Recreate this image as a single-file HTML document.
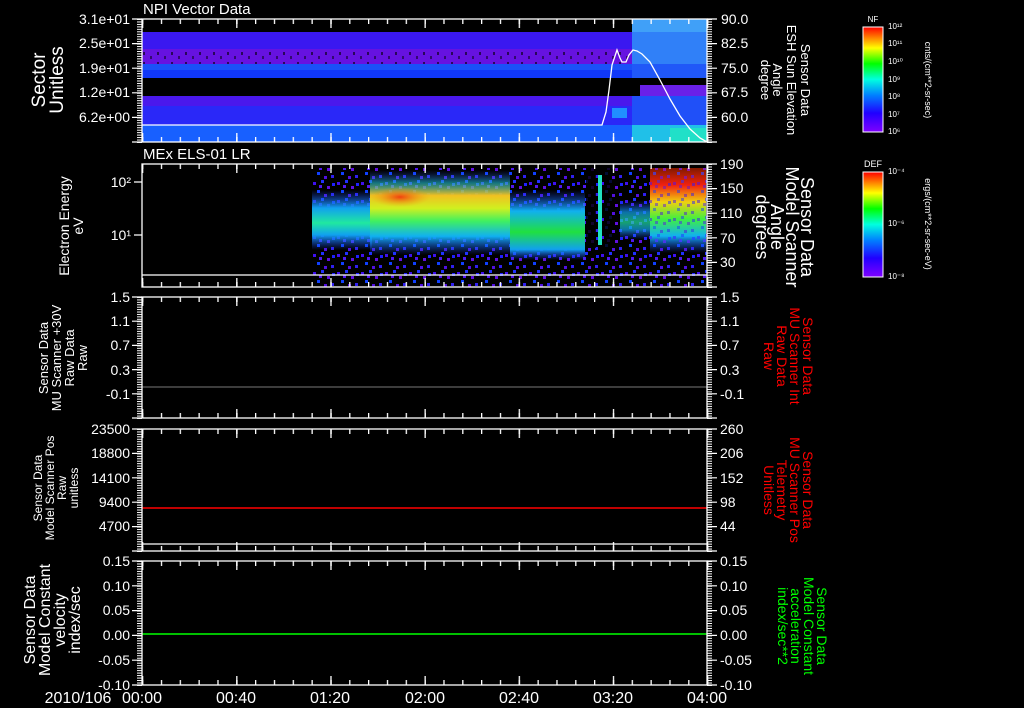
<!DOCTYPE html>
<html><head><meta charset="utf-8"><style>
html,body{margin:0;padding:0;background:#000;width:1024px;height:708px;overflow:hidden}
svg{display:block}
text{font-family:"Liberation Sans",sans-serif}
</style></head><body>
<svg width="1024" height="708" viewBox="0 0 1024 708" xmlns="http://www.w3.org/2000/svg" fill="#fff">
<defs>
<pattern id="noise" width="24" height="18" patternUnits="userSpaceOnUse">
<rect x="1" y="2" width="3" height="3" fill="#4010f0"/><rect x="9" y="0" width="3" height="3" fill="#2030ff"/>
<rect x="15" y="6" width="3" height="3" fill="#6010e0"/><rect x="5" y="10" width="3" height="3" fill="#1040ff"/>
<rect x="19" y="13" width="3" height="3" fill="#3020f0"/><rect x="12" y="14" width="3" height="3" fill="#5010e0"/>
<rect x="20" y="3" width="3" height="3" fill="#2020ff"/><rect x="7" y="5" width="3" height="3" fill="#5018f0"/>
</pattern>
<pattern id="speck" width="14" height="10" patternUnits="userSpaceOnUse">
<rect x="3" y="2" width="2" height="3" fill="#000" opacity=".6"/><rect x="10" y="6" width="2" height="3" fill="#000" opacity=".5"/>
</pattern>
<pattern id="xt" x="142" y="0" width="18.833" height="10" patternUnits="userSpaceOnUse"><rect x="0" y="0" width="1.3" height="10" fill="#fff"/></pattern>
<pattern id="xT" x="142" y="0" width="94.167" height="12" patternUnits="userSpaceOnUse"><rect x="0" y="0" width="1.3" height="12" fill="#fff"/></pattern>
<pattern id="y1" x="0" y="19" width="10" height="2.46" patternUnits="userSpaceOnUse"><rect width="10" height="1" fill="#fff"/></pattern>
<pattern id="y2" x="0" y="164" width="10" height="2.46" patternUnits="userSpaceOnUse"><rect width="10" height="1" fill="#fff"/></pattern>
<pattern id="y3" x="0" y="297" width="10" height="2.42" patternUnits="userSpaceOnUse"><rect width="10" height="1" fill="#fff"/></pattern>
<pattern id="y4" x="0" y="429" width="10" height="2.44" patternUnits="userSpaceOnUse"><rect width="10" height="1" fill="#fff"/></pattern>
<pattern id="y5" x="0" y="561" width="10" height="2.48" patternUnits="userSpaceOnUse"><rect width="10" height="1" fill="#fff"/></pattern>
<linearGradient id="nf" x1="0" y1="1" x2="0" y2="0">
<stop offset="0" stop-color="#8000ff"/><stop offset=".18" stop-color="#2000ff"/><stop offset=".35" stop-color="#0080ff"/><stop offset=".5" stop-color="#00ffe0"/><stop offset=".65" stop-color="#00ff00"/><stop offset=".8" stop-color="#ffff00"/><stop offset="1" stop-color="#ff0000"/>
</linearGradient>
<linearGradient id="g1" x1="0" y1="0" x2="0" y2="1">
<stop offset="0" stop-color="#2040ff" stop-opacity="0"/><stop offset=".3" stop-color="#10a0f0"/><stop offset=".55" stop-color="#20e8a0"/><stop offset=".75" stop-color="#10a0f0"/><stop offset="1" stop-color="#2040ff" stop-opacity="0"/>
</linearGradient>
<linearGradient id="g2" x1="0" y1="0" x2="0" y2="1">
<stop offset="0" stop-color="#3040ff" stop-opacity="0"/><stop offset=".15" stop-color="#20c0d0" stop-opacity=".6"/><stop offset=".3" stop-color="#f0c020"/><stop offset=".45" stop-color="#d0f020"/><stop offset=".6" stop-color="#40f060"/><stop offset=".78" stop-color="#10b0f0"/><stop offset="1" stop-color="#2040ff" stop-opacity="0"/>
</linearGradient>
<linearGradient id="g3" x1="0" y1="0" x2="0" y2="1">
<stop offset="0" stop-color="#2040ff" stop-opacity="0"/><stop offset=".3" stop-color="#10b0f0"/><stop offset=".6" stop-color="#20e040"/><stop offset=".85" stop-color="#10a0f0"/><stop offset="1" stop-color="#2040ff" stop-opacity="0"/>
</linearGradient>
<linearGradient id="g4" x1="0" y1="0" x2="0" y2="1">
<stop offset="0" stop-color="#ff3000" stop-opacity=".5"/><stop offset=".2" stop-color="#f02010"/><stop offset=".4" stop-color="#f0d010"/><stop offset=".6" stop-color="#40f040"/><stop offset=".8" stop-color="#10b0f0"/><stop offset="1" stop-color="#2040ff" stop-opacity="0"/>
</linearGradient>
<radialGradient id="or" cx=".5" cy=".5" r=".5"><stop offset="0" stop-color="#f04010"/><stop offset="1" stop-color="#f0a010" stop-opacity="0"/></radialGradient>
</defs>

<!-- Panel 1 spectrogram -->
<rect x="142" y="32" width="490" height="17" fill="#3a18f0"/>
<rect x="142" y="49" width="490" height="15" fill="#6612e0"/>
<rect x="142" y="49" width="490" height="15" fill="url(#speck)"/>
<rect x="142" y="64" width="490" height="6" fill="#1a50f8"/>
<rect x="142" y="70" width="490" height="8" fill="#1038f8"/>
<rect x="142" y="96" width="490" height="10" fill="#4a18ec"/>
<rect x="142" y="106" width="490" height="19" fill="#2a28f8"/>
<rect x="142" y="125" width="490" height="17" fill="#1860ff"/>
<rect x="632" y="19" width="75" height="13" fill="#40a0f8"/>
<rect x="632" y="32" width="75" height="32" fill="#3080f8"/>
<rect x="632" y="64" width="75" height="14" fill="#2058f8"/>
<rect x="640" y="85" width="67" height="11" fill="#6a20e8"/>
<rect x="632" y="96" width="75" height="29" fill="#2050f8"/>
<rect x="632" y="125" width="75" height="17" fill="#20c0e8"/>
<rect x="670" y="128" width="37" height="14" fill="#20e0c8"/>
<rect x="612" y="108" width="15" height="10" fill="#2090ff"/>
<polyline fill="none" stroke="#fff" stroke-width="1.3" points="142,125 602,125 606,112 609,90 612,65 615,56 617,50 620,58 622,62 626,62 629,55 633,50 637,51 642,54 650,62 660,80 670,99 680,116 690,129 700,138 707,142"/>

<!-- Panel 2 spectrogram -->
<rect x="312" y="168" width="395" height="119" fill="url(#noise)"/>
<rect x="312" y="190" width="60" height="60" fill="url(#g1)"/>
<rect x="370" y="170" width="140" height="85" fill="url(#g2)"/>
<ellipse cx="400" cy="197" rx="30" ry="10" fill="url(#or)"/>
<rect x="510" y="190" width="75" height="70" fill="url(#g3)"/>
<rect x="620" y="200" width="30" height="40" fill="url(#g1)" opacity=".7"/>
<rect x="598" y="175" width="4" height="70" fill="#20e0c0"/>
<rect x="650" y="168" width="56" height="85" fill="url(#g4)"/>
<rect x="650" y="168" width="56" height="85" fill="url(#noise)" opacity=".5"/>
<rect x="586" y="168" width="10" height="80" fill="#000" opacity=".8"/>
<rect x="604" y="168" width="8" height="80" fill="#000" opacity=".8"/>
<line x1="142" y1="275" x2="707" y2="275" stroke="#fff" stroke-width="1.3"/>

<!-- data lines -->
<line x1="142" y1="387" x2="707" y2="387" stroke="#777" stroke-width="1"/>
<line x1="142" y1="508" x2="707" y2="508" stroke="#ff0000" stroke-width="1.5"/>
<line x1="142" y1="544" x2="707" y2="544" stroke="#fff" stroke-width="1.3"/>
<line x1="142" y1="634" x2="707" y2="634" stroke="#00ff00" stroke-width="1.5"/>

<!-- frames -->
<g stroke="#fff" stroke-width="1.3" fill="none">
<rect x="142" y="19" width="565" height="123"/>
<rect x="142" y="164" width="565" height="123"/>
<rect x="142" y="297" width="565" height="121"/>
<rect x="142" y="429" width="565" height="122"/>
<rect x="142" y="561" width="565" height="124"/>
</g>
<!-- x ticks -->
<g>
<rect x="141.5" y="19" width="567" height="5" fill="url(#xt)"/><rect x="141.5" y="137" width="567" height="5" fill="url(#xt)"/>
<rect x="141.5" y="19" width="567" height="9" fill="url(#xT)"/><rect x="141.5" y="133" width="567" height="9" fill="url(#xT)"/>
<rect x="141.5" y="164" width="567" height="5" fill="url(#xt)"/><rect x="141.5" y="282" width="567" height="5" fill="url(#xt)"/>
<rect x="141.5" y="164" width="567" height="9" fill="url(#xT)"/><rect x="141.5" y="278" width="567" height="9" fill="url(#xT)"/>
<rect x="141.5" y="297" width="567" height="5" fill="url(#xt)"/><rect x="141.5" y="413" width="567" height="5" fill="url(#xt)"/>
<rect x="141.5" y="297" width="567" height="9" fill="url(#xT)"/><rect x="141.5" y="409" width="567" height="9" fill="url(#xT)"/>
<rect x="141.5" y="429" width="567" height="5" fill="url(#xt)"/><rect x="141.5" y="546" width="567" height="5" fill="url(#xt)"/>
<rect x="141.5" y="429" width="567" height="9" fill="url(#xT)"/><rect x="141.5" y="542" width="567" height="9" fill="url(#xT)"/>
<rect x="141.5" y="561" width="567" height="5" fill="url(#xt)"/><rect x="141.5" y="680" width="567" height="5" fill="url(#xt)"/>
<rect x="141.5" y="561" width="567" height="9" fill="url(#xT)"/><rect x="141.5" y="676" width="567" height="9" fill="url(#xT)"/>
</g>
<!-- y dense ticks -->
<g>
<rect x="707" y="19" width="5" height="124" fill="url(#y1)"/><rect x="137" y="19" width="5" height="124" fill="url(#y1)"/>
<rect x="707" y="164" width="5" height="124" fill="url(#y2)"/>
<rect x="707" y="297" width="5" height="122" fill="url(#y3)"/><rect x="137" y="297" width="5" height="122" fill="url(#y3)"/>
<rect x="707" y="429" width="5" height="123" fill="url(#y4)"/><rect x="137" y="429" width="5" height="123" fill="url(#y4)"/>
<rect x="707" y="561" width="5" height="125" fill="url(#y5)"/><rect x="137" y="561" width="5" height="125" fill="url(#y5)"/>
</g>
<g stroke="#fff" stroke-width="1.2">
<path d="M707 19h10M707 43.6h10M707 68.2h10M707 92.8h10M707 117.4h10M707 142h10M132 19h10M132 43.6h10M132 68.2h10M132 92.8h10M132 117.4h10M132 142h10"/>
<path d="M707 164h10M707 188.6h10M707 213.2h10M707 237.8h10M707 262.4h10M707 287h10M134 182h8M134 235h8"/>
<path d="M707 297h10M707 321.2h10M707 345.4h10M707 369.6h10M707 393.8h10M707 418h10M132 297h10M132 321.2h10M132 345.4h10M132 369.6h10M132 393.8h10M132 418h10"/>
<path d="M707 429h10M707 453.4h10M707 477.8h10M707 502.2h10M707 526.6h10M707 551h10M132 429h10M132 453.4h10M132 477.8h10M132 502.2h10M132 526.6h10M132 551h10"/>
<path d="M707 561h10M707 585.8h10M707 610.6h10M707 635.4h10M707 660.2h10M707 685h10M132 561h10M132 585.8h10M132 610.6h10M132 635.4h10M132 660.2h10M132 685h10"/>
</g>

<!-- Titles -->
<text x="143" y="14" font-size="15" font-family="Liberation Mono,monospace">NPI Vector Data</text>
<text x="143" y="159" font-size="15" font-family="Liberation Mono,monospace">MEx ELS-01 LR</text>

<g font-size="14" text-anchor="end">
<text x="130" y="24">3.1e+01</text><text x="130" y="48">2.5e+01</text><text x="130" y="73">1.9e+01</text><text x="130" y="97">1.2e+01</text><text x="130" y="122">6.2e+00</text>
<text x="131" y="187">10²</text><text x="131" y="240">10¹</text>
<text x="130" y="302">1.5</text><text x="130" y="326">1.1</text><text x="130" y="350">0.7</text><text x="130" y="375">0.3</text><text x="130" y="399">-0.1</text>
<text x="130" y="434">23500</text><text x="130" y="458">18800</text><text x="130" y="483">14100</text><text x="130" y="507">9400</text><text x="130" y="531">4700</text>
<text x="130" y="566">0.15</text><text x="130" y="591">0.10</text><text x="130" y="615">0.05</text><text x="130" y="640">0.00</text><text x="130" y="665">-0.05</text><text x="130" y="690">-0.10</text>
</g>
<g font-size="14">
<text x="721" y="24">90.0</text><text x="721" y="48">82.5</text><text x="721" y="73">75.0</text><text x="721" y="97">67.5</text><text x="721" y="122">60.0</text>
<text x="720" y="169">190</text><text x="720" y="193">150</text><text x="720" y="218">110</text><text x="720" y="243">70</text><text x="720" y="267">30</text>
<text x="720" y="302">1.5</text><text x="720" y="326">1.1</text><text x="720" y="350">0.7</text><text x="720" y="375">0.3</text><text x="720" y="399">-0.1</text>
<text x="720" y="434">260</text><text x="720" y="458">206</text><text x="720" y="483">152</text><text x="720" y="507">98</text><text x="720" y="531">44</text>
<text x="720" y="566">0.15</text><text x="720" y="591">0.10</text><text x="720" y="615">0.05</text><text x="720" y="640">0.00</text><text x="720" y="665">-0.05</text><text x="720" y="690">-0.10</text>
</g>

<g font-size="16" text-anchor="middle">
<text x="78" y="703">2010/106</text>
<text x="142" y="703">00:00</text><text x="236" y="703">00:40</text><text x="330" y="703">01:20</text><text x="425" y="703">02:00</text><text x="519" y="703">02:40</text><text x="613" y="703">03:20</text><text x="707" y="703">04:00</text>
</g>

<g text-anchor="middle">
<g transform="translate(45,80) rotate(-90)" font-size="19"><text y="0">Sector</text><text y="18">Unitless</text></g>
<g transform="translate(69,226) rotate(-90)" font-size="14"><text y="0">Electron Energy</text><text y="14">eV</text></g>
<g transform="translate(48,358) rotate(-90)" font-size="13"><text y="0">Sensor Data</text><text y="13">MU Scanner +30V</text><text y="26">Raw Data</text><text y="39">Raw</text></g>
<g transform="translate(42,488) rotate(-90)" font-size="12"><text y="0">Sensor Data</text><text y="12">Model Scanner Pos</text><text y="24">Raw</text><text y="36">unitless</text></g>
<g transform="translate(35,620) rotate(-90)" font-size="16"><text y="0">Sensor Data</text><text y="15">Model Constant</text><text y="30">velocity</text><text y="45">index/sec</text></g>
</g>

<g text-anchor="middle">
<g transform="translate(801,80) rotate(90)" font-size="13"><text y="0">Sensor Data</text><text y="14">ESH Sun Elevation</text><text y="28">Angle</text><text y="40">degree</text></g>
<g transform="translate(801,227) rotate(90)" font-size="18"><text y="0">Sensor Data</text><text y="15">Model Scanner</text><text y="30">Angle</text><text y="45">degrees</text></g>
<g transform="translate(803,356) rotate(90)" font-size="14" fill="#f00"><text y="0">Sensor Data</text><text y="13">MU Scanner Int</text><text y="26">Raw Data</text><text y="39">Raw</text></g>
<g transform="translate(803,490) rotate(90)" font-size="14" fill="#f00"><text y="0">Sensor Data</text><text y="13">MU Scanner Pos</text><text y="26">Telemetry</text><text y="39">Unitless</text></g>
<g transform="translate(817,626) rotate(90)" font-size="14" fill="#0f0"><text y="0">Sensor Data</text><text y="13">Model Constant</text><text y="26">acceleration</text><text y="39">index/sec**2</text></g>
</g>

<rect x="863" y="27" width="20" height="105" fill="url(#nf)" stroke="#fff" stroke-width="1"/>
<rect x="863" y="172" width="20" height="105" fill="url(#nf)" stroke="#fff" stroke-width="1"/>
<text x="873" y="22" font-size="8" text-anchor="middle">NF</text>
<text x="873" y="167" font-size="9" text-anchor="middle">DEF</text>
<g font-size="8">
<text x="888" y="29">10¹²</text><text x="888" y="46">10¹¹</text><text x="888" y="64">10¹⁰</text><text x="888" y="82">10⁹</text><text x="888" y="99">10⁸</text><text x="888" y="117">10⁷</text><text x="888" y="134">10⁶</text>
<text x="888" y="174">10⁻⁴</text><text x="888" y="226">10⁻⁶</text><text x="888" y="279">10⁻⁸</text>
</g>
<g font-size="9" text-anchor="middle">
<text transform="translate(925,80) rotate(90)">cnts/(cm**2-sr-sec)</text>
<text transform="translate(925,224) rotate(90)">ergs/(cm**2-sr-sec-eV)</text>
</g>
</svg>
</body></html>
